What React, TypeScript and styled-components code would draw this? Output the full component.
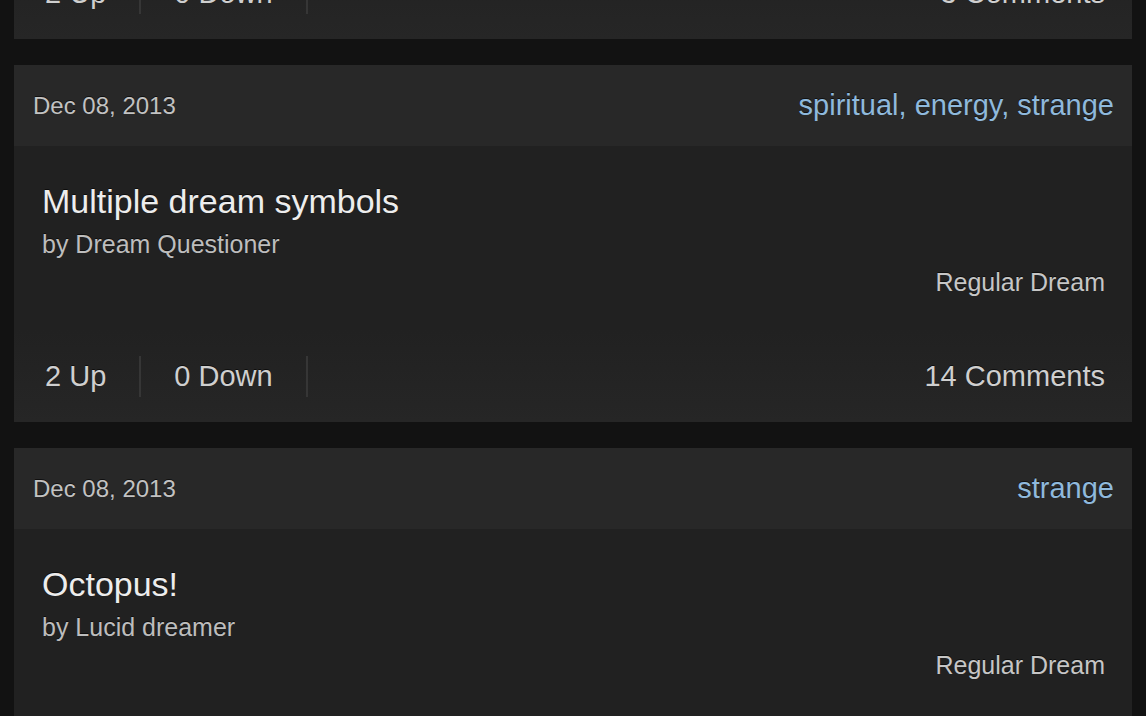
import React from "react";
import styled, { createGlobalStyle } from "styled-components";

const GlobalStyle = createGlobalStyle`
    html, body {
        margin: 0;
        padding: 0;
        background: #121212;
        overflow: hidden;
    }
    body {
        font-family: "Liberation Sans", Arial, Helvetica, sans-serif;
        -webkit-font-smoothing: antialiased;
    }
`;

type Dream = {
    date: string;
    tags: string[];
    title: string;
    author: string;
    kind: string;
    up: number;
    down: number;
    comments: number;
};

const dreams: Dream[] = [
    {
        date: "Dec 08, 2013",
        tags: ["flying"],
        title: "Falling from a tower",
        author: "by Night Owl",
        kind: "Regular Dream",
        up: 2,
        down: 0,
        comments: 3,
    },
    {
        date: "Dec 08, 2013",
        tags: ["spiritual", "energy", "strange"],
        title: "Multiple dream symbols",
        author: "by Dream Questioner",
        kind: "Regular Dream",
        up: 2,
        down: 0,
        comments: 14,
    },
    {
        date: "Dec 08, 2013",
        tags: ["strange"],
        title: "Octopus!",
        author: "by Lucid dreamer",
        kind: "Regular Dream",
        up: 1,
        down: 0,
        comments: 5,
    },
];

export default function App() {
    return (
        <>
            <GlobalStyle />
            <Feed>
                {dreams.map((d, i) => (
                    <Card key={i}>
                        <CardHeader>
                            <DateLabel>{d.date}</DateLabel>
                            <Tags>{d.tags.join(", ")}</Tags>
                        </CardHeader>
                        <CardBody>
                            <Title>{d.title}</Title>
                            <Author>{d.author}</Author>
                            <Kind>{d.kind}</Kind>
                        </CardBody>
                        <Footer>
                            <Vote>{d.up} Up</Vote>
                            <Vote $divided>{d.down} Down</Vote>
                            <Divider />
                            <Comments>{d.comments} Comments</Comments>
                        </Footer>
                    </Card>
                ))}
            </Feed>
        </>
    );
}

// list is scrolled: the first card sits mostly above the viewport
const Feed = styled.div`
    display: flex;
    flex-direction: column;
    gap: 26px;
    margin-top: -318px;
    padding: 0 14px;
`;

const Card = styled.article`
    display: flex;
    flex-direction: column;
    height: 357px;
    background: #212121;
    color: #d2d2d2;
    text-shadow: 0 -1px 0 rgba(0, 0, 0, 0.6);
`;

const CardHeader = styled.header`
    display: flex;
    align-items: center;
    justify-content: space-between;
    height: 81px;
    padding: 0 18px 0 19px;
    background: #282828;
`;

const DateLabel = styled.span`
    font-size: 24px;
    color: #c2c2c2;
`;

const Tags = styled.span`
    font-size: 29px;
    color: #8fb9dc;
`;

const CardBody = styled.div`
    display: flex;
    flex-direction: column;
    padding: 35px 27px 0 28px;
`;

const Title = styled.h2`
    margin: 0;
    font-size: 34px;
    font-weight: 400;
    line-height: 40px;
    color: #ededed;
`;

const Author = styled.span`
    margin-top: 9px;
    font-size: 25px;
    line-height: 28px;
    color: #bdbdbd;
`;

const Kind = styled.span`
    align-self: flex-end;
    margin-top: 10px;
    font-size: 25px;
    line-height: 28px;
    color: #c6c6c6;
`;

const Footer = styled.footer`
    display: flex;
    align-items: center;
    margin-top: auto;
    height: 92px;
    padding: 0 27px 0 31px;
    background: linear-gradient(#212121, #262626);
`;

const Vote = styled.span<{ $divided?: boolean }>`
    display: flex;
    align-items: center;
    height: 41px;
    padding: ${(p) => (p.$divided ? "0 33px" : "0 33px 0 0")};
    font-size: 29px;
    color: #cfcfcf;
    border-left: ${(p) => (p.$divided ? "2px solid #363636" : "none")};
`;

const Divider = styled.span`
    width: 2px;
    height: 41px;
    background: #363636;
`;

const Comments = styled.span`
    margin-left: auto;
    font-size: 29px;
    color: #cfcfcf;
`;
